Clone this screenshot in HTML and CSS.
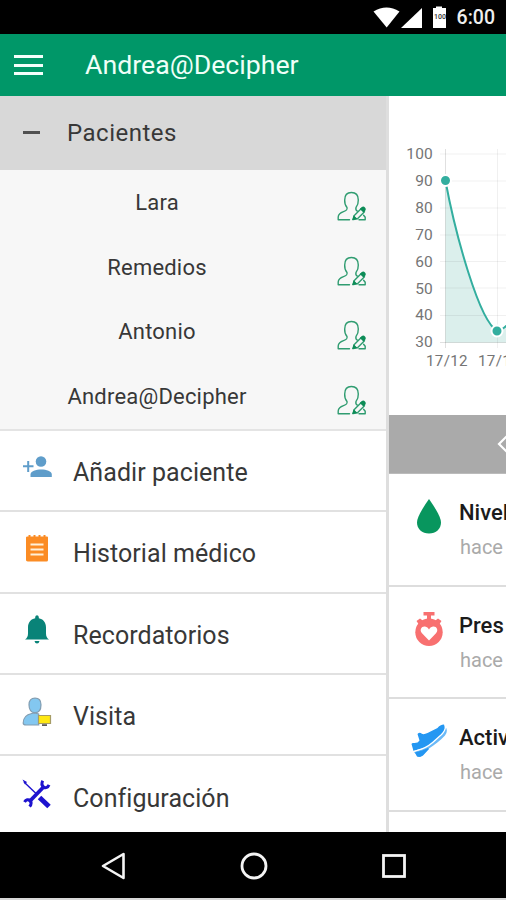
FILE: index.html
```html
<!DOCTYPE html>
<html lang="es">
<head>
<meta charset="utf-8">
<title>Decipher</title>
<link rel="stylesheet" href="styles.css">
</head>
<body>
<svg class="defs" width="0" height="0">
  <symbol id="edit-user" viewBox="0 0 30 30">
    <g fill="none" stroke="#2f9c70" stroke-width="1.4" stroke-linecap="round" stroke-linejoin="round">
      <path d="M12.500 28.700H1.200V26c.2-3 2.500-4.300 5.300-5.300 3.200-1.100 4-1.900 3.500-4.200C8 14.200 7.500 12 7.700 9c0-4.500 2-7.500 6.700-7.500S21.300 4.500 21.300 9c.1 3-.6 5.500-2.300 7.500-.5 2 0 3 1.300 3.700"/>
      <path d="M16.300 28.500l1-4 7-7 3.200 3.200-7 7zM22 28.700h6.200v-2.500l-1.600-2"/>
    </g>
    <path d="M15 29.200l1.600-5 3.700 3.500zM22.800 18l2-2q1.700-1 3.200.4t.4 3.200l-2 2z" fill="#0d8c57"/>
  </symbol>
</svg>
<div class="phone">
  <div class="status">
    <svg class="status-icons" width="76" height="24" viewBox="0 0 76 24">
      <path d="M1.500 5.500Q14.500-2.500 27.500 5.500L14.700 21.500z" fill="#fff"/>
      <path d="M50 2v20H29z" fill="#fff"/>
      <path d="M61 2h3V.5h6V2h4v20H61z" fill="#fff"/>
      <text x="62" y="13" class="battery">100</text>
    </svg>
    <span class="time">6:00</span>
  </div>
  <header class="appbar">
    <span class="burger"><i></i><i></i><i></i></span>
    <h1>Andrea@Decipher</h1>
  </header>
  <main class="body">
    <nav class="drawer">
      <div class="group"><i class="minus"></i><span>Pacientes</span></div>
      <ul class="patients">
        <li><span>Lara</span><svg width="30" height="30"><use href="#edit-user"/></svg></li>
        <li><span>Remedios</span><svg width="30" height="30"><use href="#edit-user"/></svg></li>
        <li><span>Antonio</span><svg width="30" height="30"><use href="#edit-user"/></svg></li>
        <li><span>Andrea@Decipher</span><svg width="30" height="30"><use href="#edit-user"/></svg></li>
      </ul>
      <ul class="menu">
        <li>
          <svg width="30" height="30" viewBox="0 0 30 30"><g fill="#5f9dca"><circle cx="19" cy="8.500" r="5.300"/><path d="M8.500 24v-2.500c0-3.500 5.500-5 10.700-5s10.600 1.500 10.600 5V24z"/><path d="M5.200 8h2v4.200h4.300v2H7.200V19h-2v-4.800H1v-2h4.200z"/></g></svg>
          <span>Añadir paciente</span>
        </li>
        <li>
          <svg width="30" height="30" viewBox="0 0 30 30"><path d="M5.500 2.500h1V1h2v1.500h3V1h2v1.500h3V1h2v1.500h3V1h2v1.500H25q1 0 1 1V26q0 1.500-1.500 1.500h-17Q4 27.500 4 26V3.500q0-1 1.500-1z" fill="#fb8c24"/><path d="M8.500 10.500h13M8.500 15.500h13M8.500 20.500h13" stroke="#fff0d8" stroke-width="2.200"/></svg>
          <span>Historial médico</span>
        </li>
        <li>
          <svg width="30" height="30" viewBox="0 0 30 30"><path d="M3 24.500q3-2 3-6v-6C6 7 9 4 13.200 3.200V2Q13.500.3 15 .3T16.800 2v1.200C21 4 24 7 24 12.500v6q0 4 3 6zM12.500 26h5q-.5 2.500-2.500 2.500T12.500 26z" fill="#098378"/></svg>
          <span>Recordatorios</span>
        </li>
        <li>
          <svg width="30" height="30" viewBox="0 0 30 30"><g fill="#83c7f0" stroke="#829db1" stroke-width="1.200"><path d="M1.200 26c0-5 3.500-8.500 8.500-9.500l3-.5 4 1v11H4q-2.800 0-2.800-2z"/><path d="M13 1.200c4 0 6 2.300 6 6.500 0 5-2.200 8-6 8s-6-3-6-8c0-4.200 2-6.500 6-6.500z"/></g><path d="M16.500 18.500h12v8h-12z" fill="#ffe813" stroke="#a69c66" stroke-width="1.200"/><path d="M20 27.300h5v1.600h-5z" fill="#4b4844"/></svg>
          <span>Visita</span>
        </li>
        <li>
          <svg width="30" height="30" viewBox="0 0 30 30"><g fill="none" stroke="#1d12cf"><path d="M2 3l12 11.500" stroke-width="1.400"/><path d="M17.500 18.500l9.500 9" stroke-width="5"/><path d="M7 23L22.500 7" stroke-width="3.800"/><path d="M20.800 1.800c-1.800 3-.8 5 1 6.500 2 1 4 .2 5.200-2.500M2.500 23c1.500-2.500 4-3 5.500-1.500 1.600 1.800 1.500 4-.5 6" stroke-width="3"/></g><path d="M.5.500L5 3 3 5.500z" fill="#1d12cf"/></svg>
          <span>Configuración</span>
        </li>
      </ul>
    </nav>
    <section class="content">
      <svg class="chart" width="117" height="319" viewBox="389 96 117 319">
        <path d="M445.500 181C455 232 479 322 497.500 331Q503 330 510 322V342.500H445.500z" fill="#dbefec"/>
        <path d="M440 154H506M440 181H506M440 208H506M440 235H506M440 261.500H506M440 288H506M440 315.500H506M497.500 149V348" stroke="#000" stroke-opacity=".06"/>
        <path d="M440 342.500H506M445.500 149V348" stroke="#000" stroke-opacity=".12"/>
        <path d="M445.500 181C455 232 479 322 497.500 331Q503 330 510 322" fill="none" stroke="#33ae9f" stroke-width="2"/>
        <g fill="#33ae9f" stroke="#fff" stroke-width="2"><circle cx="445.500" cy="180.500" r="5.500"/><circle cx="497" cy="331" r="5.500"/></g>
        <g class="ticks" text-anchor="end">
          <text x="433" y="159">100</text><text x="433" y="186">90</text><text x="433" y="213">80</text><text x="433" y="240">70</text><text x="433" y="266.500">60</text><text x="433" y="293.500">50</text><text x="433" y="320">40</text><text x="433" y="347">30</text>
        </g>
        <g class="ticks days"><text x="426" y="366">17/12</text><text x="478" y="366">17/1</text></g>
      </svg>
      <div class="pager"><svg width="20" height="24" viewBox="0 0 20 24"><path d="M13 1L2 12l11 11" fill="none" stroke="#fff" stroke-width="2.200"/></svg></div>
      <ul class="metrics">
        <li>
          <svg width="36" height="36" viewBox="0 0 36 36"><path d="M18 0Q30 17 30 23.500C30 30 25 34.500 18 34.500S6 30 6 23.500Q6 17 18 0z" fill="#08965e"/></svg>
          <div><b>Nivel</b><span>hace</span></div>
        </li>
        <li>
          <svg width="36" height="36" viewBox="0 0 36 36"><g fill="#f87070"><path d="M12.500 0h11v3.500H20v4h-4v-4h-3.500zM5.500 9l3.500-2.500 4 3-4.500 4zM30.500 9L27 6.500l-4 3 4.500 4z"/><circle cx="18" cy="20.300" r="13.700"/></g><path d="M18 28.500l-7-7.200c-3-3.500-.3-7.300 3-6.800 2 .3 3.200 1.500 4 3 .8-1.500 2-2.700 4-3 3.300-.5 6 3.300 3 6.800z" fill="#fff"/></svg>
          <div><b>Pres</b><span>hace</span></div>
        </li>
        <li>
          <svg width="36" height="36" viewBox="0 0 36 36"><path d="M.5 20Q1 18.500 3 19q4 .2 5.500-2.500L6.500 10Q8.500 8 10.500 9.500T16.500 9l10-5Q29 .5 33 .5l1 4c-1 5-7 9-12 13.500Q17 23 11 24.500L2.500 27z" fill="#2497f2"/><path d="M3 28l8-2.800C20 22 25 15 30 11q4-3.500 4.500-8 3 4-.5 8.500c-5 5.500-10 9-16 13l-7 7.500-4 1z" fill="#6bb9f7"/><path d="M2.500 27.500l8.500-2.700C20 22 25 15 30 11q4-3.500 4.500-8" fill="none" stroke="#fff" stroke-width="1.300"/><path d="M4 28.500l7-2 6-2.500 1 1-6 6.500-3 1.500-3-.5z" fill="#2497f2"/></svg>
          <div><b>Activ</b><span>hace</span></div>
        </li>
      </ul>
    </section>
  </main>
  <footer class="navbar">
    <svg width="24" height="28" viewBox="0 0 24 28"><path d="M22.500 2v24L2 14z" fill="none" stroke="#f4f4f4" stroke-width="2.600" stroke-linejoin="round"/></svg>
    <svg width="28" height="28" viewBox="0 0 28 28"><circle cx="14" cy="14" r="12" fill="none" stroke="#f4f4f4" stroke-width="2.800"/></svg>
    <svg width="24" height="28" viewBox="0 0 24 28"><rect x="1.500" y="3.500" width="21" height="21" fill="none" stroke="#f4f4f4" stroke-width="2.800"/></svg>
  </footer>
</div>
</body>
</html>
```
FILE: styles.css
```css
* { box-sizing: border-box; }
body { margin: 0; background: #d8d8d8; font-family: Roboto, "Liberation Sans", sans-serif; color: #383838; overflow: hidden; }
ul { list-style: none; margin: 0; padding: 0; }
svg { display: block; flex: none; }
.defs { position: absolute; }
.phone { width: 506px; height: 899px; overflow: hidden; display: flex; flex-direction: column; }
.status { height: 34px; flex: none; background: #000; display: flex; align-items: center; justify-content: flex-end; padding: 1px 11px 0 0; gap: 9px; }
.battery { font-size: 7px; font-weight: 500; fill: #333; }
.time { color: #eee; font-size: 19.500px; font-weight: 500; line-height: 34px; }
.appbar { height: 62px; flex: none; background: #009768; display: flex; align-items: center; padding-left: 14px; }
.burger { width: 29px; display: grid; gap: 5.500px; }
.burger i { height: 3px; background: #f4fffb; }
.appbar h1 { margin: -1px 0 0 42px; color: #effff8; font-size: 26.700px; font-weight: 400; line-height: 60px; }
.body { height: 736px; flex: none; display: flex; background: #fff; }
.drawer { width: 389px; flex: none; border-right: 3px solid #dedede; }
.group { height: 74px; background: #d8d8d8; display: flex; align-items: center; padding: 0 0 1px 23px; font-size: 24px; letter-spacing: .5px; }
.minus { width: 17px; height: 3px; background: #505050; margin-right: 27px; }
.patients { height: 261px; background: #f7f7f7; border-bottom: 2px solid #e4e4e4; }
.patients li { height: 64.700px; display: flex; align-items: center; font-size: 22px; letter-spacing: .2px; }
.patients span { width: 314px; text-align: center; }
.patients svg { margin: 7px 0 0 23px; }
.menu li { height: 81.300px; border-bottom: 2px solid #e1e1e1; display: flex; align-items: center; padding-left: 22px; font-size: 25px; letter-spacing: .06px; gap: 21px; }
.menu li:last-child { border: 0; }
.menu svg { margin-top: -6px; }
.menu span { padding-top: 4px; }
.content { flex: 1; min-width: 0; overflow: hidden; }
.ticks { font-size: 15.500px; letter-spacing: .2px; fill: #757575; }
.days { font-size: 15.200px; letter-spacing: .3px; }
.pager { height: 59px; background: #aaa; display: flex; align-items: center; padding-left: 108px; border-bottom: 1px solid #bbb; }
.metrics li { height: 112.500px; border-bottom: 2px solid #ddd; display: flex; padding: 26px 0 0 22px; gap: 12px; }
.metrics svg { margin-top: -1px; }
.metrics div { white-space: nowrap; }
.metrics b { display: block; font-size: 22px; font-weight: 500; line-height: 26px; color: #1b1b1b; }
.metrics span { display: block; margin-top: 9px; padding-left: 1px; font-size: 20px; line-height: 25px; color: #aaa; }
.navbar { height: 66px; flex: none; background: #000; display: flex; align-items: center; justify-content: space-between; padding: 2px 100px 0 101px; }
```
